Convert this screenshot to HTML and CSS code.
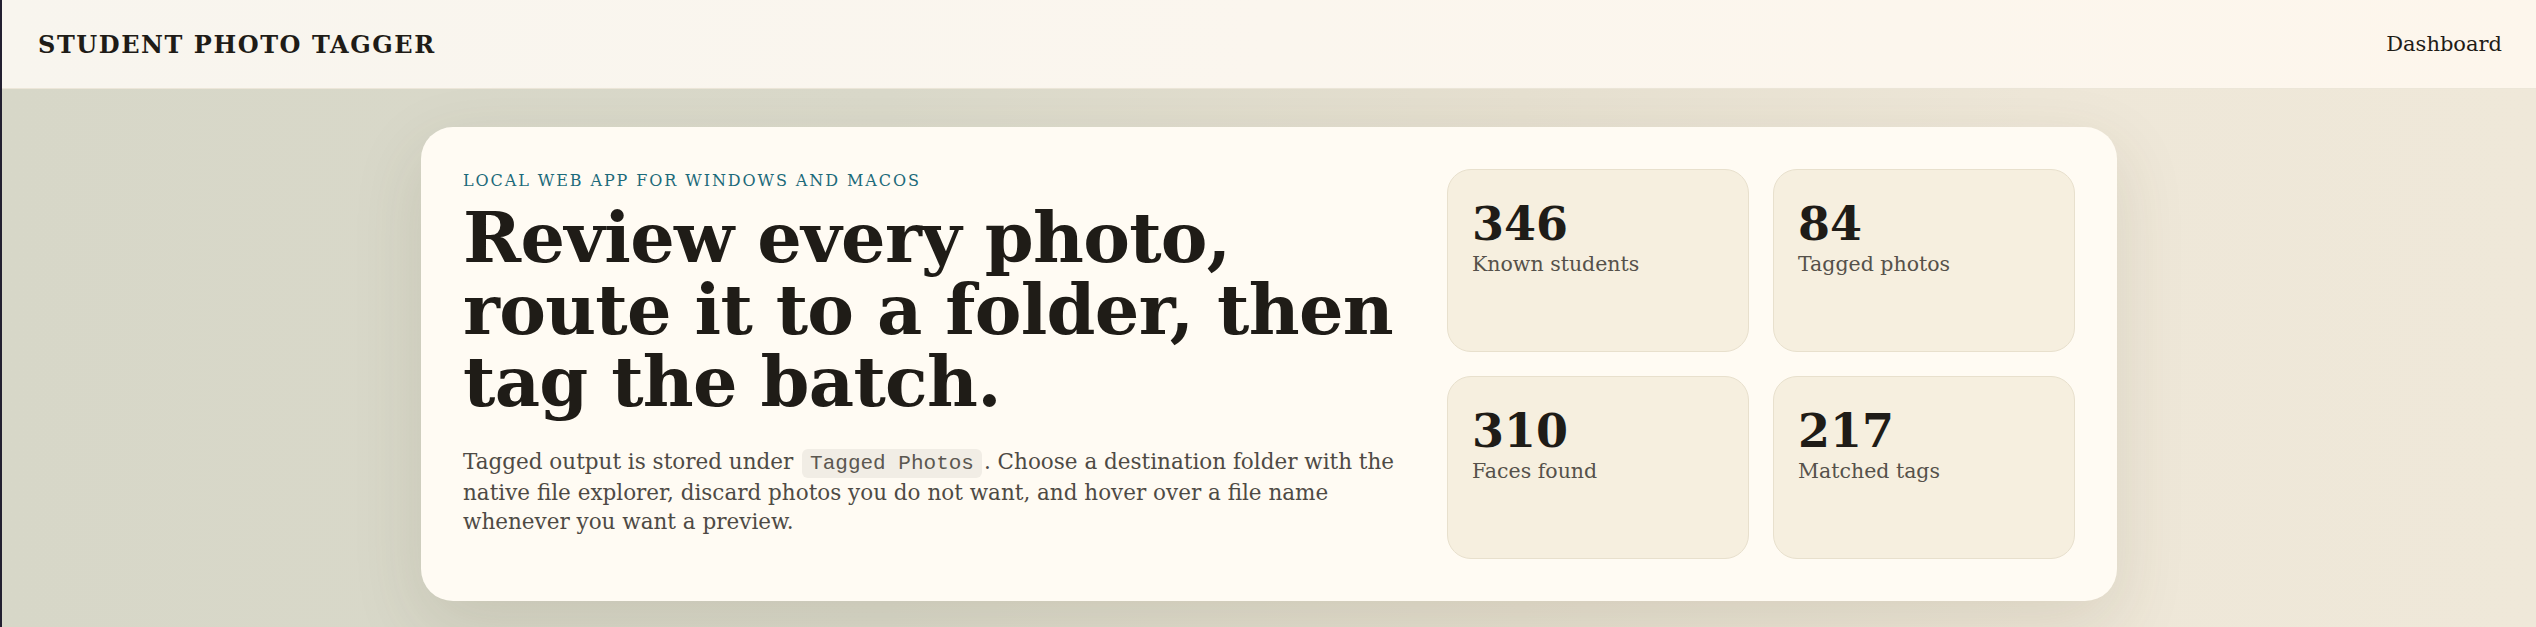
FILE: index.html
```html
<!DOCTYPE html>
<html lang="en">
<head>
  <meta charset="UTF-8" />
  <title>Student Photo Tagger</title>
  <link rel="stylesheet" href="styles.css">
</head>
<body>

  <!-- Top bar -->
  <header class="topbar">
    <div class="brand">STUDENT PHOTO TAGGER</div>
    <a class="nav-link" href="#">Dashboard</a>
  </header>

  <main class="page">
    <section class="hero">
      <div class="hero-copy">
        <p class="eyebrow">LOCAL WEB APP FOR WINDOWS AND MACOS</p>
        <h1>Review every photo, route it to a folder, then tag the batch.</h1>
        <p class="lead">Tagged output is stored under <code>Tagged Photos</code>. Choose a destination folder with the native file explorer, discard photos you do not want, and hover over a file name whenever you want a preview.</p>
      </div>

      <div class="stats">
        <div class="stat"><div class="stat-num">346</div><div class="stat-label">Known students</div></div>
        <div class="stat"><div class="stat-num">84</div><div class="stat-label">Tagged photos</div></div>
        <div class="stat"><div class="stat-num">310</div><div class="stat-label">Faces found</div></div>
        <div class="stat"><div class="stat-num">217</div><div class="stat-label">Matched tags</div></div>
      </div>
    </section>
  </main>

</body>
</html>
```

FILE: styles.css
```css
* { box-sizing: border-box; }
html, body { height: 100%; }
body {
  margin: 0;
  border-left: 2px solid #221f30;
  font-family: "DejaVu Serif", "Liberation Serif", serif;
  color: #1f1c17;
  background: linear-gradient(90deg, #d7d7c8 0%, #dad9ca 35%, #e6e0d0 60%, #eee7d8 80%, #efe8d9 100%);
  overflow: hidden;
}

.topbar {
  height: 89px;
  display: flex;
  align-items: center;
  justify-content: space-between;
  padding: 0 34px 0 36px;
  background: linear-gradient(90deg, #f8f5ee, #fbf6ee 50%, #fdf6ec);
  border-bottom: 1px solid #ece6d8;
}
.brand { font-weight: bold; font-size: 24px; letter-spacing: 0.065em; }
.nav-link { color: #1f1c17; text-decoration: none; font-size: 21px; }

.page { padding-top: 38px; }

.hero {
  max-width: 1696px;
  margin: 0 auto;
  padding: 42px;
  display: grid;
  grid-template-columns: 1.5fr 1fr;
  gap: 42px;
  background: #fffbf3;
  border-radius: 32px;
  box-shadow: 0 24px 70px rgba(80, 68, 40, 0.13);
}

.eyebrow {
  margin: 2px 0 0;
  font-size: 16px;
  line-height: 1.2;
  letter-spacing: 0.12em;
  color: #1c6a7a;
}
h1 {
  margin: 12px 0 0;
  font-size: 70px;
  line-height: 72px;
  letter-spacing: -0.01em;
  font-weight: bold;
}
.lead {
  margin: 29px 0 0;
  font-size: 21.5px;
  line-height: 29px;
  color: #4e4a44;
}
code {
  font-family: "Liberation Mono", monospace;
  font-size: 21px;
  color: #5b5750;
  background: #f1ede5;
  border-radius: 6px;
  padding: 3px 8px;
  margin: 0 2px;
}

.stats {
  display: grid;
  grid-template-columns: 1fr 1fr;
  gap: 24px;
}
.stat {
  min-height: 183px;
  padding: 31px 24px 0;
  background: #f6efdf;
  border: 1px solid #e8e0cd;
  border-radius: 24px;
}
.stat-num { font-size: 46px; line-height: 1; font-weight: bold; }
.stat-label { margin-top: 2px; font-size: 20.5px; line-height: 1.5; color: #55514a; }
```
